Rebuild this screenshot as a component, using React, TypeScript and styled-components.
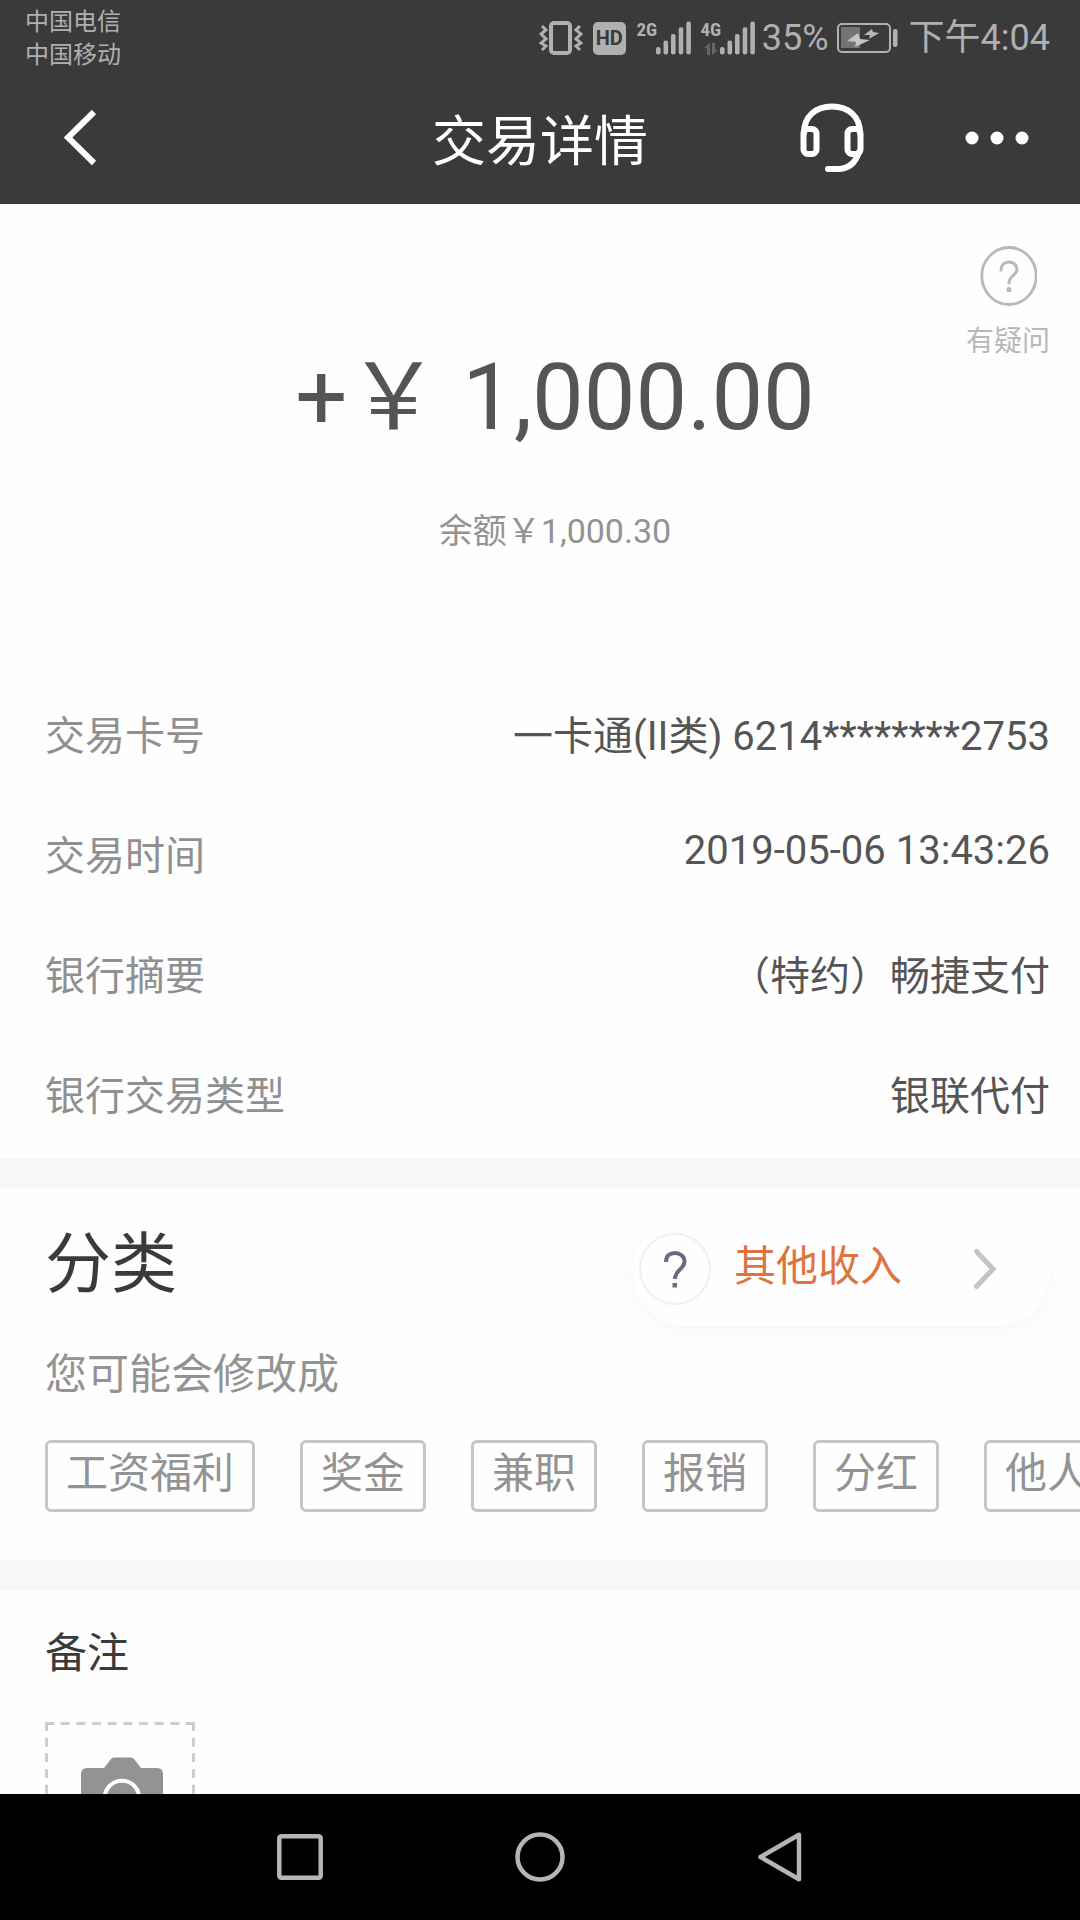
import React from 'react';
import styled, { createGlobalStyle } from 'styled-components';

const GlobalStyle = createGlobalStyle`
  * { box-sizing: border-box; }
  html, body { margin: 0; padding: 0; }
  body {
    background: #fefefe;
    color: #555555;
    font-family: Roboto, "Noto Sans CJK SC", sans-serif;
  }
  h1, h2, p, dl, dt, dd, ul { margin: 0; padding: 0; font-weight: 400; }
  button {
    margin: 0;
    padding: 0;
    border: 0;
    background: none;
    color: inherit;
    font: inherit;
    cursor: pointer;
  }
  svg { display: block; flex: none; }
`;

const Screen = styled.div`
  display: flex;
  flex-direction: column;
  height: 100vh;
`;

const StatusBar = styled.div`
  display: flex;
  flex: none;
  align-items: center;
  justify-content: space-between;
  height: 72px;
  padding: 4px 30px 0 25px;
  background: #3a3a3a;
  color: #b0b0b0;
`;

const Carriers = styled.div`
  padding-top: 2px;
  font-size: 24px;
  line-height: 33px;
`;

const StatusItems = styled.div`
  display: flex;
  align-items: center;
  font-size: 36px;
  line-height: 44px;
`;

const VoiceBadge = styled.span`
  display: flex;
  align-items: center;
  justify-content: center;
  width: 33px;
  height: 33px;
  margin: 0 12px 0 10px;
  border-radius: 5px;
  background: #b0b0b0;
  color: #3a3a3a;
  font-size: 20px;
  font-weight: 700;
  line-height: 33px;
`;

const Signal = styled.span<{ $last?: boolean }>`
  display: flex;
  height: 34px;
  margin-right: ${(p) => (p.$last ? '7px' : '11px')};
`;

const Network = styled.span`
  display: flex;
  flex-direction: column;
  align-items: center;
  justify-content: space-between;
  width: 18px;
  font-family: "Roboto Condensed", "Liberation Sans Narrow", Roboto, sans-serif;
  font-size: 19px;
  font-weight: 700;
  line-height: 18px;
`;

const BatteryBox = styled.span`
  margin: 0 11px 0 8px;
`;

const TitleBar = styled.header`
  display: grid;
  grid-template-columns: 1fr auto 1fr;
  flex: none;
  align-items: center;
  height: 132px;
  padding: 0 50px;
  background: #3a3a3a;
  color: #ffffff;
`;

const Title = styled.h1`
  font-size: 54px;
  line-height: 72px;
  padding-top: 10px;
`;

const Actions = styled.div`
  display: flex;
  align-items: center;
  justify-content: flex-end;
  gap: 100px;
`;

const IconButton = styled.button`
  display: flex;
  justify-self: start;
`;

const Content = styled.main`
  flex: 1;
  min-height: 0;
  overflow-x: hidden;
  overflow-y: auto;
  scrollbar-width: none;
`;

const Hero = styled.section`
  display: grid;
  grid-template-columns: 1fr;
  padding: 42px 30px 156px;

  > * { grid-area: 1 / 1; }
`;

const Sums = styled.div`
  display: flex;
  flex-direction: column;
  align-items: center;
  gap: 59px;
  padding: 98px 0 0 30px;
`;

const Amount = styled.p`
  font-size: 92px;
  line-height: 108px;
`;

const Balance = styled.p`
  color: #939393;
  font-size: 34px;
  line-height: 40px;
`;

const HelpButton = styled.button`
  z-index: 1;
  display: flex;
  flex-direction: column;
  align-items: center;
  align-self: start;
  justify-self: end;
  gap: 20px;
  color: #b8b8b8;
  font-size: 28px;
  line-height: 32px;
`;

const Details = styled.dl`
  display: flex;
  flex-direction: column;
  gap: 60px;
  padding: 0 30px 31px 45px;
`;

const DetailRow = styled.div`
  display: flex;
  align-items: flex-start;
  justify-content: space-between;
  font-size: 40px;
  line-height: 60px;
`;

const Label = styled.dt`
  color: #909090;
`;

const Value = styled.dd<{ $numeric?: boolean }>`
  line-height: ${(p) => (p.$numeric ? '48px' : '60px')};
`;

const Divider = styled.div`
  height: 30px;
  background: #f7f7f7;
`;

const Category = styled.section`
  padding: 30px 0 48px 45px;
`;

const CategoryHead = styled.div`
  display: flex;
  align-items: flex-start;
  justify-content: space-between;
  padding-right: 30px;
`;

const CategoryTitle = styled.h2`
  color: #3a3a3a;
  font-size: 66px;
  line-height: 94px;
`;

const CategoryPill = styled.button`
  display: flex;
  align-items: center;
  width: 418px;
  height: 108px;
  padding: 0 53px 6px 7px;
  border-radius: 54px;
  background: #fefefe;
  box-shadow: 0 4px 20px rgba(0, 0, 0, 0.035);
  color: #dd7440;
  font-size: 42px;
  line-height: 56px;
`;

const PillIcon = styled.span`
  display: flex;
  align-items: center;
  justify-content: center;
  width: 72px;
  height: 72px;
  margin-right: 23px;
  border: 2px solid #f0f0f0;
  border-radius: 50%;
`;

const PillText = styled.span`
  flex: 1;
  padding-bottom: 4px;
  text-align: left;
`;

const Hint = styled.p`
  margin: 21px 0 37px;
  color: #939393;
  font-size: 42px;
  line-height: 56px;
`;

const Tags = styled.div`
  display: flex;
  gap: 45px;
  overflow: hidden;
`;

const Tag = styled.button`
  flex: none;
  height: 72px;
  padding: 0 18px 4px;
  border: 3px solid #c6c6c6;
  border-radius: 6px;
  color: #939393;
  font-size: 42px;
  line-height: 56px;
`;

const Memo = styled.section`
  padding: 36px 45px 40px;
`;

const MemoTitle = styled.h2`
  margin-bottom: 40px;
  color: #3a3a3a;
  font-size: 42px;
  line-height: 56px;
`;

const NavBar = styled.nav`
  display: flex;
  flex: none;
  align-items: center;
  justify-content: center;
  gap: 190px;
  height: 126px;
  background: #000000;
`;

const VibrateIcon = () => (
  <svg width="44" height="34" viewBox="0 0 44 34" fill="none" stroke="#b0b0b0" aria-hidden="true">
    <rect x="12" y="2" width="19" height="30" rx="3" strokeWidth="4" />
    <path d="M3 5l4 4-5 4 5 5-5 4 5 3-4 4" strokeWidth="3" />
    <path d="M41 5l-4 4 5 4-5 5 5 4-5 3 4 4" strokeWidth="3" />
  </svg>
);

const SignalBars = () => (
  <svg width="35" height="34" viewBox="0 0 35 34" fill="#b0b0b0" aria-hidden="true">
    <rect x="0" y="26" width="4.6" height="7.5" rx="2" />
    <rect x="7.5" y="19.5" width="4.6" height="14" rx="2" />
    <rect x="15" y="13" width="4.6" height="20.5" rx="2" />
    <rect x="22.7" y="6.3" width="4.6" height="27.2" rx="2" />
    <rect x="30.3" y="0.5" width="4.6" height="33" rx="2" />
  </svg>
);

const DataArrows = () => (
  <svg width="14" height="12" viewBox="0 0 14 12" fill="#666666" aria-hidden="true">
    <path d="M3 12V5H0L6 0v12zM8 0h3v7h3l-6 5z" />
  </svg>
);

const BatteryIcon = () => (
  <svg width="61" height="30" viewBox="0 0 61 30" aria-hidden="true">
    <rect x="1" y="1" width="52" height="28" rx="4" fill="none" stroke="#b0b0b0" strokeWidth="2" />
    <rect x="4" y="4" width="19" height="21" fill="#747474" />
    <path d="M21 10l-11 8 9 1-1 5 15-7-10-1z" fill="#c4c4c4" />
    <path d="M35 6l-8 6 6 0-1 4 10-6-6-1z" fill="#b8b8b8" />
    <rect x="56" y="6" width="4.5" height="18" rx="2" fill="#b0b0b0" />
  </svg>
);

const BackIcon = () => (
  <svg width="60" height="60" viewBox="0 0 60 60" fill="none" stroke="#ffffff" strokeWidth="6" aria-hidden="true">
    <path d="M44 4L18 29.5 44 55" />
  </svg>
);

const HeadsetIcon = () => (
  <svg width="64" height="70" viewBox="0 0 64 70" fill="none" stroke="#ffffff" strokeWidth="6" strokeLinecap="round" aria-hidden="true">
    <path d="M4 30C4 13 16 3.500 32 3.500S60 13 60 30" />
    <rect x="3.500" y="26" width="13" height="25" rx="4.500" />
    <rect x="47.500" y="26" width="13" height="25" rx="4.500" />
    <path d="M59 49C55 61 48 66 38 66H28" />
  </svg>
);

const MoreIcon = () => (
  <svg width="66" height="14" viewBox="0 0 66 14" fill="#ffffff" aria-hidden="true">
    <circle cx="8" cy="7" r="6.500" />
    <circle cx="33" cy="7" r="6.500" />
    <circle cx="58" cy="7" r="6.500" />
  </svg>
);

const HelpIcon = () => (
  <svg width="58" height="60" viewBox="0 0 58 60" fill="none" stroke="#b8b8b8" aria-hidden="true">
    <ellipse cx="30" cy="30" rx="27.200" ry="28.500" strokeWidth="2.800" />
    <path d="M22 24c0-5 3.500-8 8-8s8 3 8 7.500c0 6-8 6-8 13.500" strokeWidth="3" strokeLinecap="round" />
    <circle cx="30" cy="43.500" r="2.600" fill="#b8b8b8" stroke="none" />
  </svg>
);

const QuestionIcon = () => (
  <svg width="24" height="38" viewBox="0 0 24 38" fill="none" stroke="#6c6a82" aria-hidden="true">
    <path d="M3 12C3 5.500 7 3 12 3s9.500 3 9.500 8.500C21.500 19 12 20 12 29" strokeWidth="4" />
    <rect x="9.500" y="33" width="4.500" height="4.500" fill="#6c6a82" stroke="none" />
  </svg>
);

const ChevronIcon = () => (
  <svg width="24" height="42" viewBox="0 0 24 42" fill="none" stroke="#c4c4c4" strokeWidth="5" strokeLinecap="round" aria-hidden="true">
    <path d="M3.500 3.500L20 21 3.500 38.500" />
  </svg>
);

const PhotoIcon = () => (
  <svg width="150" height="150" viewBox="0 0 150 150" aria-hidden="true">
    <g stroke="#cccccc" strokeWidth="3" strokeDasharray="9 6.667">
      <path d="M0 1.500H150M0 148.500H150M1.500 0V150M148.500 0V150" />
    </g>
    <path
      d="M36 52q0-6 6-6h17l7-9q1-1.500 3-1.500h17q2 0 3 1.500l7 9h16q6 0 6 6v48q0 6-6 6H42q-6 0-6-6z"
      fill="#939393"
    />
    <circle cx="77" cy="76" r="17.300" fill="none" stroke="#fefefe" strokeWidth="4" />
  </svg>
);

const RecentsIcon = () => (
  <svg width="50" height="50" viewBox="0 0 50 50" fill="none" stroke="#b5b5b5" strokeWidth="4.500" aria-hidden="true">
    <rect x="4.300" y="4.300" width="41.400" height="41.400" rx="2" />
  </svg>
);

const HomeIcon = () => (
  <svg width="50" height="50" viewBox="0 0 50 50" fill="none" stroke="#b5b5b5" strokeWidth="4.500" aria-hidden="true">
    <circle cx="25" cy="25" r="22.500" />
  </svg>
);

const ReturnIcon = () => (
  <svg width="50" height="50" viewBox="0 0 50 50" fill="none" stroke="#b5b5b5" strokeWidth="4.500" strokeLinejoin="round" aria-hidden="true">
    <path d="M44 2.800V47.200L5.500 25z" />
  </svg>
);

const details = [
  { label: '交易卡号', value: '一卡通(II类) 6214********2753' },
  { label: '交易时间', value: '2019-05-06 13:43:26', numeric: true },
  { label: '银行摘要', value: '（特约）畅捷支付' },
  { label: '银行交易类型', value: '银联代付' },
];

const tags = ['工资福利', '奖金', '兼职', '报销', '分红', '他人'];

export default function App() {
  return (
    <Screen>
      <GlobalStyle />
      <StatusBar>
        <Carriers>
          <div>中国电信</div>
          <div>中国移动</div>
        </Carriers>
        <StatusItems>
          <VibrateIcon />
          <VoiceBadge>HD</VoiceBadge>
          <Signal>
            <Network>2G</Network>
            <SignalBars />
          </Signal>
          <Signal $last>
            <Network>
              4G
              <DataArrows />
            </Network>
            <SignalBars />
          </Signal>
          <div>35%</div>
          <BatteryBox>
            <BatteryIcon />
          </BatteryBox>
          <div>下午4:04</div>
        </StatusItems>
      </StatusBar>
      <TitleBar>
        <IconButton type="button" aria-label="返回">
          <BackIcon />
        </IconButton>
        <Title>交易详情</Title>
        <Actions>
          <IconButton type="button" aria-label="客服">
            <HeadsetIcon />
          </IconButton>
          <IconButton type="button" aria-label="更多">
            <MoreIcon />
          </IconButton>
        </Actions>
      </TitleBar>
      <Content>
        <Hero>
          <Sums>
            <Amount>+￥ 1,000.00</Amount>
            <Balance>余额￥1,000.30</Balance>
          </Sums>
          <HelpButton type="button">
            <HelpIcon />
            有疑问
          </HelpButton>
        </Hero>
        <Details>
          {details.map((d) => (
            <DetailRow key={d.label}>
              <Label>{d.label}</Label>
              <Value $numeric={d.numeric}>{d.value}</Value>
            </DetailRow>
          ))}
        </Details>
        <Divider />
        <Category>
          <CategoryHead>
            <CategoryTitle>分类</CategoryTitle>
            <CategoryPill type="button">
              <PillIcon>
                <QuestionIcon />
              </PillIcon>
              <PillText>其他收入</PillText>
              <ChevronIcon />
            </CategoryPill>
          </CategoryHead>
          <Hint>您可能会修改成</Hint>
          <Tags>
            {tags.map((t) => (
              <Tag key={t} type="button">
                {t}
              </Tag>
            ))}
          </Tags>
        </Category>
        <Divider />
        <Memo>
          <MemoTitle>备注</MemoTitle>
          <IconButton type="button" aria-label="添加照片">
            <PhotoIcon />
          </IconButton>
        </Memo>
      </Content>
      <NavBar>
        <IconButton type="button" aria-label="最近任务">
          <RecentsIcon />
        </IconButton>
        <IconButton type="button" aria-label="主屏幕">
          <HomeIcon />
        </IconButton>
        <IconButton type="button" aria-label="后退">
          <ReturnIcon />
        </IconButton>
      </NavBar>
    </Screen>
  );
}
